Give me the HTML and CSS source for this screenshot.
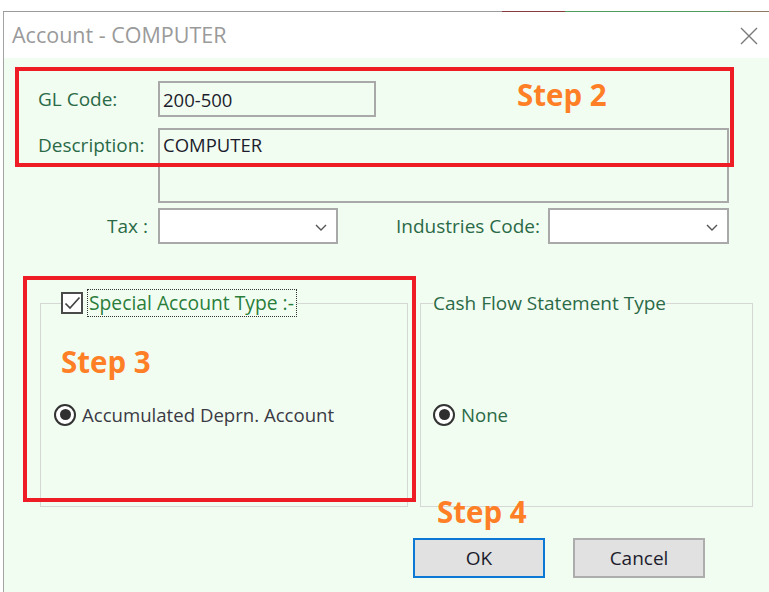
FILE: index.html
```html
<!DOCTYPE html>
<html lang="en">
<head>
<meta charset="utf-8">
<title>Account - COMPUTER</title>
<link rel="stylesheet" href="styles.css">
</head>
<body>
<div class="screen">
  <div class="desktop-edge"></div>
  <div class="window">
    <header class="titlebar">
      <span class="title">Account - COMPUTER</span>
      <svg class="close" width="18" height="18" viewBox="0 0 18 18" aria-label="Close">
        <path d="M1 1 L17 17 M17 1 L1 17" stroke="#7a7a7a" stroke-width="1.4" fill="none"/>
      </svg>
    </header>

    <div class="dialog">
      <div class="fields">
        <label class="lbl">GL Code:</label>
        <div class="input input-code">200-500</div>

        <label class="lbl lbl-top">Description:</label>
        <div class="input input-desc">COMPUTER</div>

        <label class="lbl lbl-right">Tax :</label>
        <div class="combo-row">
          <div class="combo combo-tax">
            <svg class="chev" width="12" height="7" viewBox="0 0 12 7"><path d="M1 1 L6 6 L11 1" stroke="#555" stroke-width="1.4" fill="none"/></svg>
          </div>
          <div class="combo-pair">
            <label class="lbl">Industries Code:</label>
            <div class="combo combo-ind">
              <svg class="chev" width="12" height="7" viewBox="0 0 12 7"><path d="M1 1 L6 6 L11 1" stroke="#555" stroke-width="1.4" fill="none"/></svg>
            </div>
          </div>
        </div>
      </div>

      <div class="groups">
        <fieldset class="group group-special">
          <legend class="legend legend-check">
            <span class="checkbox">
              <svg width="17" height="15" viewBox="0 0 17 15"><path d="M1.5 7.5 L6 12 L15.5 1.5" stroke="#444" stroke-width="1.7" fill="none"/></svg>
            </span>
            <span class="focus-label">Special Account Type :-</span>
          </legend>
          <div class="radio-row radio-row-special">
            <span class="radio"><span class="radio-dot"></span></span>
            <span class="radio-text">Accumulated Deprn. Account</span>
          </div>
        </fieldset>

        <fieldset class="group group-cash">
          <legend class="legend legend-cash">Cash Flow Statement Type</legend>
          <div class="radio-row radio-row-cash">
            <span class="radio"><span class="radio-dot"></span></span>
            <span class="radio-text radio-text-green">None</span>
          </div>
        </fieldset>
      </div>

      <div class="buttons">
        <button class="btn btn-default">OK</button>
        <button class="btn">Cancel</button>
      </div>
    </div>
  </div>

  <div class="callout callout-step2"></div>
  <div class="callout callout-step3"></div>
  <span class="step step-2">Step 2</span>
  <span class="step step-3">Step 3</span>
  <span class="step step-4">Step 4</span>
</div>
</body>
</html>
```

FILE: styles.css
```css
html, body {
  margin: 0;
  padding: 0;
  background: #ffffff;
}

.screen {
  position: relative;
  width: 769px;
  height: 592px;
  overflow: hidden;
  padding-top: 11px;
  box-sizing: border-box;
  font-family: "Open Sans", "Noto Sans", sans-serif;
  font-size: 19px;
}

/* window edge, with the coloured bits of the window behind showing through */
.desktop-edge {
  height: 1px;
  margin-left: 3px;
  background: linear-gradient(to right,
    #9b9b9b 0, #9b9b9b 499px,
    #8a3b3b 499px, #8a3b3b 562px,
    #4f9d5e 562px, #4f9d5e 727px,
    #8c7b62 727px, #8c7b62 100%);
}

.window {
  margin-left: 3px;
  border-left: 1px solid #a3a3a3;
  height: 580px;
  display: flex;
  flex-direction: column;
}

.titlebar {
  height: 46px;
  background: #ffffff;
  display: flex;
  align-items: center;
  justify-content: space-between;
  padding: 0 11px 0 8px;
}

.title {
  color: #9a9a9a;
  font-size: 21.5px;
  line-height: 26px;
}

.close {
  display: block;
  margin-top: 1px;
}

.dialog {
  flex: 1;
  background: #f2fdf2;
  padding-top: 23px;
}

/* label / field grid */
.fields {
  display: grid;
  grid-template-columns: 154px 1fr;
  padding-right: 40px;
  row-gap: 11px;
}

.lbl {
  color: #2b6a47;
  line-height: 25px;
  padding-left: 34px;
  align-self: center;
  white-space: nowrap;
}

.lbl-top {
  align-self: start;
  padding-top: 5px;
}

.lbl-right {
  text-align: right;
  padding-left: 0;
  padding-right: 10px;
  margin-top: -6px;
}

.input {
  box-sizing: border-box;
  border: 2px solid #a9a9a9;
  color: #1c1c2c;
  font-size: 18.5px;
  line-height: 25px;
  padding-left: 3px;
}

.input-code {
  width: 218px;
  height: 36px;
  display: flex;
  align-items: center;
}

.input-desc {
  height: 75px;
  padding-top: 2px;
}

.combo-row {
  display: flex;
  justify-content: space-between;
  align-items: center;
  margin-top: -6px;
}

.combo-pair {
  display: flex;
  align-items: center;
  gap: 8px;
}

.combo-pair .lbl {
  padding-left: 0;
}

.combo {
  box-sizing: border-box;
  height: 36px;
  background: #ffffff;
  border: 2px solid #a9a9a9;
  display: flex;
  align-items: center;
  justify-content: flex-end;
  padding-right: 9px;
}

.combo-tax { width: 180px; }
.combo-ind { width: 181px; }

.chev { display: block; margin-top: 2px; }

/* group boxes */
.groups {
  display: flex;
  gap: 12px;
  padding: 0 16px 0 36px;
  margin-top: 45px;
}

.group {
  margin: 0;
  padding: 0;
  border: 1px solid #d6d8d6;
  height: 218px;
  box-sizing: border-box;
  min-width: 0;
}

.group-special { width: 368px; flex: none; }
.group-cash { flex: 1; }

.legend {
  padding: 0;
  height: 28px;
  display: flex;
  align-items: center;
  line-height: 25px;
}

.legend-check {
  margin-left: 20px;
  gap: 4px;
}

.legend-cash {
  margin-left: 12px;
  color: #2b6a47;
}

.checkbox {
  box-sizing: border-box;
  width: 22px;
  height: 22px;
  border: 2px solid #4a4a4a;
  background: #ffffff;
  display: flex;
  align-items: center;
  justify-content: center;
}

.checkbox svg { display: block; }

.focus-label {
  color: #2a7d3a;
  border: 1px dotted #333;
  padding: 0 2px 0 1px;
  line-height: 26px;
  font-size: 19.3px;
}

.radio-row {
  display: flex;
  align-items: center;
  gap: 6px;
  margin-top: 85px;
}

.radio-row-special { margin-left: 13px; }
.radio-row-cash { margin-left: 12px; }

.radio {
  box-sizing: border-box;
  width: 22px;
  height: 22px;
  border: 2px solid #333;
  border-radius: 50%;
  background: #ffffff;
  display: flex;
  align-items: center;
  justify-content: center;
}

.radio-dot {
  width: 11px;
  height: 11px;
  border-radius: 50%;
  background: #2f2f2f;
}

.radio-text {
  color: #3a3a44;
  font-size: 18.6px;
  line-height: 25px;
}

.radio-text-green { color: #2b6a47; }

/* dialog buttons */
.buttons {
  display: flex;
  justify-content: flex-end;
  gap: 28px;
  padding-right: 64px;
  margin-top: 31px;
}

.btn {
  box-sizing: border-box;
  width: 132px;
  height: 40px;
  background: #e1e1e1;
  border: 2px solid #adadad;
  font-family: inherit;
  font-size: 19px;
  color: #1c1c2c;
  padding: 0;
}

.btn-default {
  border-color: #0a78d4;
}

/* annotation overlays */
.callout {
  position: absolute;
  box-sizing: border-box;
  border: 4px solid #ee1c25;
}

.callout-step2 { left: 15px; top: 67px; width: 719px; height: 100px; }
.callout-step3 { left: 23px; top: 276px; width: 393px; height: 226px; }

.step {
  position: absolute;
  color: #ff7f27;
  font-weight: 700;
  font-size: 29.5px;
  line-height: 30px;
}

.step-2 { left: 517px; top: 80px; }
.step-3 { left: 61px; top: 347px; }
.step-4 { left: 437px; top: 497px; }
```
